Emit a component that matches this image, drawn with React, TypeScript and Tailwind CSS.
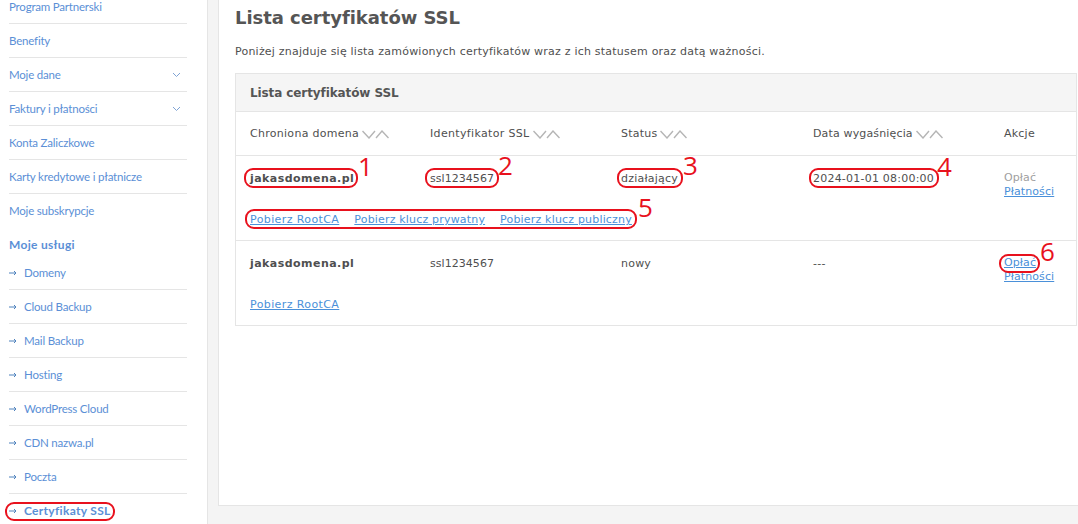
const side = "font-['Lato',sans-serif] text-[11.5px] tracking-[-0.2px] text-[#5b8fd6]";
const sideBold = "text-[12px] font-bold tracking-[0.3px]";

function Arrow() {
  return (
    <svg width="8" height="6" viewBox="0 0 8 6" className="mr-[7px] shrink-0 text-[#4f82bd]" fill="none" stroke="currentColor" strokeWidth="1">
      <path d="M0 3H7M5 1L7 3L5 5" />
    </svg>
  );
}

function Chevron() {
  return (
    <svg width="9" height="6" viewBox="0 0 9 6" className="mr-[6px] shrink-0" fill="none" stroke="#7fa3d4" strokeWidth="1">
      <path d="M1 1L4.500 4.500L8 1" />
    </svg>
  );
}

function Item({ label, chevron, sub, bold, noBorder }: { label: string; chevron?: boolean; sub?: boolean; bold?: boolean; noBorder?: boolean }) {
  return (
    <div className={`flex h-[34px] items-center justify-between ${noBorder ? "" : "border-b border-[#e5e5e5] pt-[1px]"}`}>
      <div className="flex items-center">
        {sub && <Arrow />}
        <span className={bold ? sideBold : ""}>{label}</span>
      </div>
      {chevron && <Chevron />}
    </div>
  );
}

function Sort() {
  return (
    <svg width="27" height="9" viewBox="0 0 27 9" className="ml-[3px] shrink-0" fill="none" stroke="#b5b5b5" strokeWidth="1.4">
      <path d="M0.500 1L7 8L13 1" />
      <path d="M14 8L20 1L26.500 8" />
    </svg>
  );
}

function Mark({ className }: { className: string }) {
  return <div className={`pointer-events-none absolute rounded-[9px] border-2 border-[#e8111d] ${className}`} />;
}

function Num({ className, n }: { className: string; n: string }) {
  return <div className={`pointer-events-none absolute font-['Open_Sans',sans-serif] text-[26px] leading-none font-medium text-[#e8111d] ${className}`}>{n}</div>;
}

const link = "text-[#4a90d9] underline";

function Row({ date, status, pay, links }: { date: string; status: string; pay: boolean; links: string[] }) {
  return (
    <div className="h-[85px] border-b border-[#e5e5e5] pl-[14px]">
      <div className="flex h-[56px] pt-[15px]">
        <div className="w-[180px] shrink-0 font-bold tracking-[0.45px]">jakasdomena.pl</div>
        <div className="w-[191px] shrink-0 tracking-[0.05px]">ssl1234567</div>
        <div className="w-[192px] shrink-0">{status}</div>
        <div className="w-[191px] shrink-0">{date}</div>
        <div className="flex flex-col leading-[14px] tracking-[0.1px]">
          <span className={pay ? link : "text-[#a0a0a0]"}>Opłać</span>
          <span className={link}>Płatności</span>
        </div>
      </div>
      <div className="flex gap-[15px] tracking-[0.18px]">
        {links.map((l) => (
          <span key={l} className={`${link} first:tracking-[0.4px]`}>{l}</span>
        ))}
      </div>
    </div>
  );
}

export default function App() {
  return (
    <div className="relative flex h-[524px] w-[1078px] overflow-hidden bg-[#f4f4f4]">
      <aside className={`h-full w-[208px] shrink-0 overflow-hidden border-r border-[#e5e5e5] bg-white pl-[9px] pr-[20px] ${side}`}>
        <div className="-mt-[10px]">
          <Item label="Program Partnerski" />
          <Item label="Benefity" />
          <Item label="Moje dane" chevron />
          <Item label="Faktury i płatności" chevron />
          <Item label="Konta Zaliczkowe" />
          <Item label="Karty kredytowe i płatnicze" />
          <Item label="Moje subskrypcje" noBorder />
          <div className={`flex h-[34px] items-center ${sideBold}`}>Moje usługi</div>
          <div className="-mt-[6px]">
            <Item label="Domeny" sub />
            <Item label="Cloud Backup" sub />
            <Item label="Mail Backup" sub />
            <Item label="Hosting" sub />
            <Item label="WordPress Cloud" sub />
            <Item label="CDN nazwa.pl" sub />
            <Item label="Poczta" sub />
            <Item label="Certyfikaty SSL" sub bold noBorder />
          </div>
        </div>
      </aside>

      <main className="ml-[10px] h-[506px] flex-1 border-b border-l border-[#e5e5e5] bg-white pl-[16px] font-['DejaVu_Sans',sans-serif] text-[11px] tracking-[0.22px] text-[#4f4f4f]">
        <h1 className="pt-[6px] text-[18px] leading-[24px] font-bold tracking-[-0.05px] text-[#555]">Lista certyfikatów SSL</h1>
        <p className="mt-[14px] leading-[16px]">Poniżej znajduje się lista zamówionych certyfikatów wraz z ich statusem oraz datą ważności.</p>
        <div className="mt-[13px] mr-[1px] border border-b-0 border-[#e5e5e5]">
          <div className="flex h-[38px] items-center border-b border-[#e5e5e5] bg-[#f5f5f5] pl-[14px] text-[12px] font-bold tracking-[-0.1px] text-[#555]">
            Lista certyfikatów SSL
          </div>
          <div className="flex h-[44px] items-center border-b border-[#e5e5e5] pt-[2px] pl-[14px]">
            <div className="flex w-[180px] shrink-0 items-center tracking-[0.28px]">Chroniona domena<Sort /></div>
            <div className="flex w-[191px] shrink-0 items-center tracking-[0.34px]">Identyfikator SSL<Sort /></div>
            <div className="flex w-[192px] shrink-0 items-center">Status<Sort /></div>
            <div className="flex w-[191px] shrink-0 items-center tracking-[0.15px]">Data wygaśnięcia<Sort /></div>
            <div>Akcje</div>
          </div>
          <Row status="działający" date="2024-01-01 08:00:00" pay={false} links={["Pobierz RootCA", "Pobierz klucz prywatny", "Pobierz klucz publiczny"]} />
          <Row status="nowy" date="---" pay links={["Pobierz RootCA"]} />
        </div>
      </main>

      <Mark className="left-[244px] top-[168px] h-[20px] w-[114px]" />
      <Mark className="left-[425px] top-[168px] h-[20px] w-[74px]" />
      <Mark className="left-[617px] top-[168px] h-[20px] w-[66px]" />
      <Mark className="left-[809px] top-[168px] h-[20px] w-[130px]" />
      <Mark className="left-[245px] top-[209px] h-[20px] w-[392px]" />
      <Mark className="left-[999px] top-[254px] h-[19px] w-[41px]" />
      <Mark className="left-[5px] top-[502px] h-[19px] w-[110px]" />
      <Num className="left-[358px] top-[153px]" n="1" />
      <Num className="left-[498px] top-[152px]" n="2" />
      <Num className="left-[683px] top-[152px]" n="3" />
      <Num className="left-[937px] top-[153px]" n="4" />
      <Num className="left-[638px] top-[194px]" n="5" />
      <Num className="left-[1040px] top-[238px]" n="6" />
    </div>
  );
}
